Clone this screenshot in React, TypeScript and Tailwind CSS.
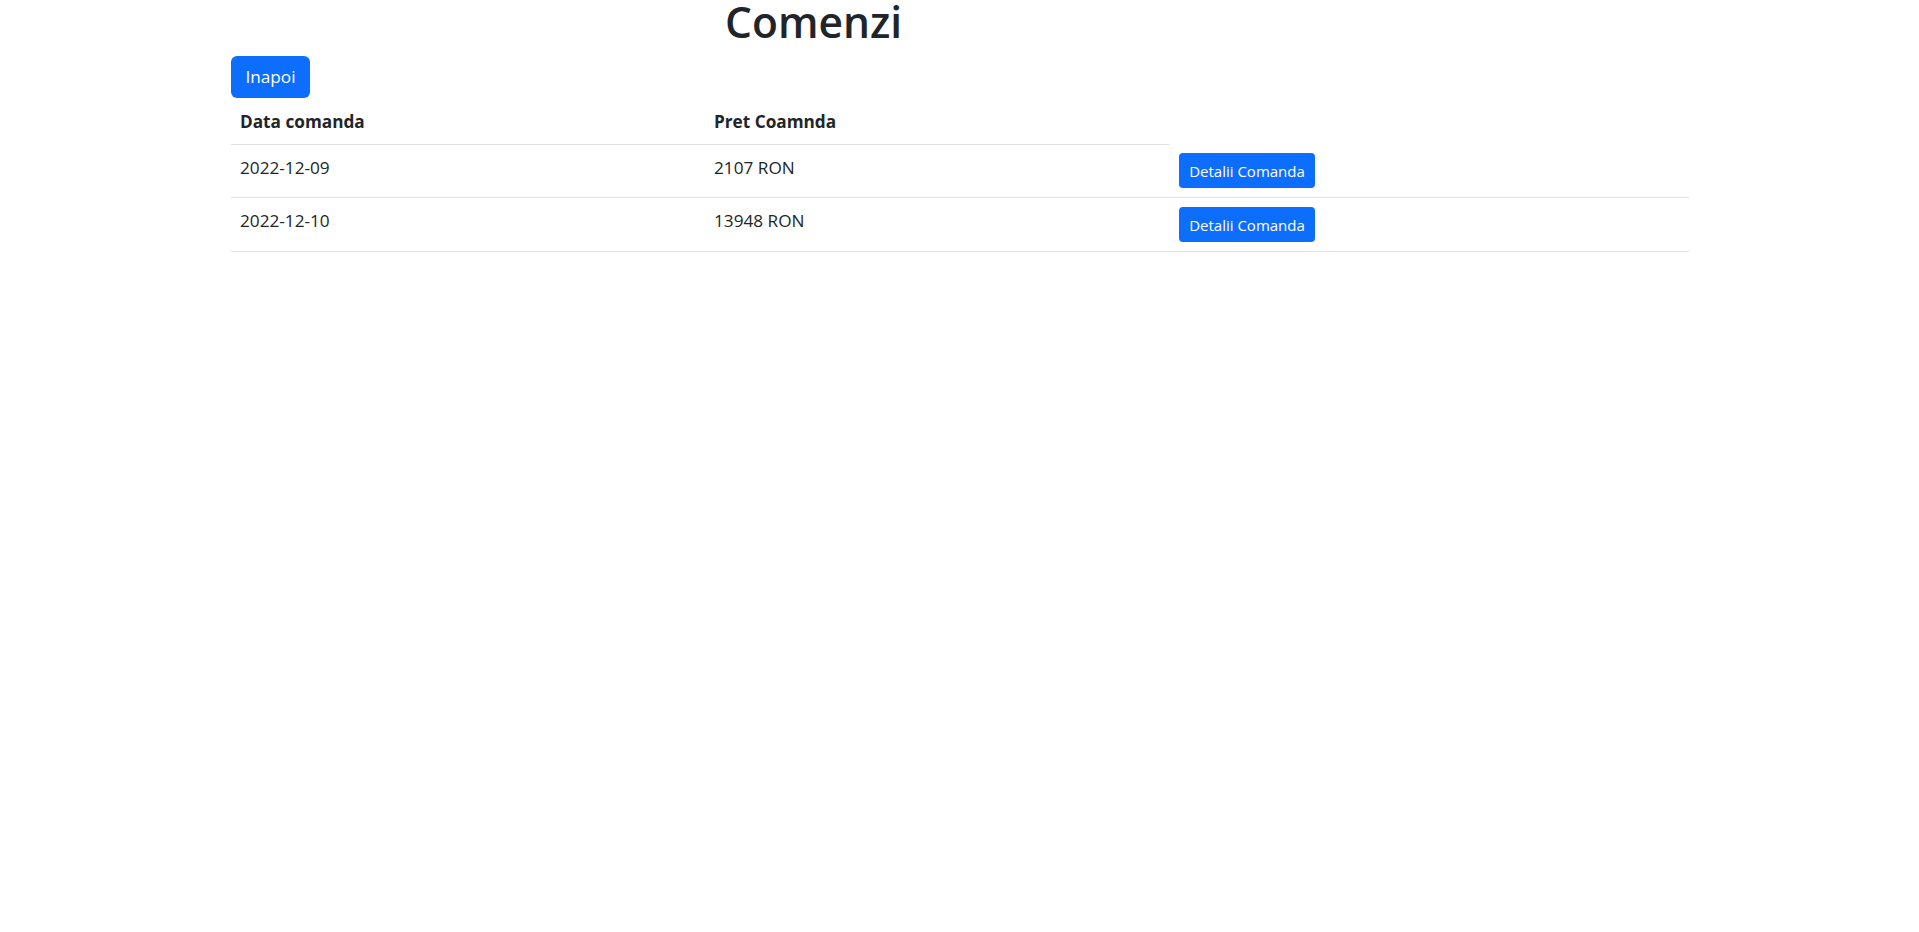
import React from 'react';

type Comanda = {
  data: string;
  pret: string;
  h: string;
  btnTop: string;
};

const comenzi: Comanda[] = [
  { data: '2022-12-09', pret: '2107 RON', h: 'h-[53px]', btnTop: 'pt-[8px]' },
  { data: '2022-12-10', pret: '13948 RON', h: 'h-[54px]', btnTop: 'pt-[9px]' },
];

export default function App() {
  return (
    <div className="min-h-screen bg-white font-['Open_Sans',sans-serif] text-[#212529]">
      <div className="ml-[231px] w-[1458px]">
        <h1 className="mb-[13px] ml-[494px] h-[43px] text-[42.5px] font-semibold leading-[43px]">
          Comenzi
        </h1>
        <button className="h-[42px] w-[79px] rounded-[6px] bg-[#0d6efd] text-center text-[17.2px] leading-[26px] text-white">
          Inapoi
        </button>

        <div className="mt-[2px]">
          <div className="grid grid-cols-[474px_464px_520px] text-[17.2px] font-bold leading-[26.4px]">
            <div className="h-[45px] border-b border-[#dee2e6] px-[9px] pt-[9px]">Data comanda</div>
            <div className="h-[45px] border-b border-[#dee2e6] px-[9px] pt-[9px]">Pret Coamnda</div>
            <div />
          </div>
          {comenzi.map((c) => (
            <div
              key={c.data}
              className={`grid grid-cols-[474px_464px_520px] border-b border-[#dee2e6] text-[17.2px] leading-[26.4px] ${c.h}`}
            >
              <div className="px-[9px] pt-[10px]">{c.data}</div>
              <div className="px-[9px] pt-[10px]">{c.pret}</div>
              <div className={`px-[10px] ${c.btnTop}`}>
                <button className="h-[35px] w-[136px] rounded-[4px] bg-[#0d6efd] text-center text-[15px] leading-[22px] text-white">
                  Detalii Comanda
                </button>
              </div>
            </div>
          ))}
        </div>
      </div>
    </div>
  );
}
